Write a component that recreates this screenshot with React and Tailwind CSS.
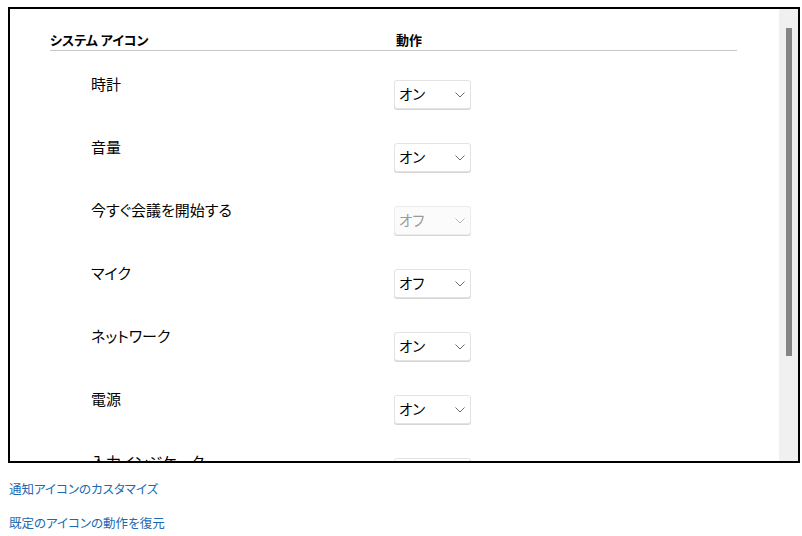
import React from "react";

const rows = [
  { label: "時計", value: "オン" },
  { label: "音量", value: "オン" },
  { label: "今すぐ会議を開始する", value: "オフ", disabled: true },
  { label: "マイク", value: "オフ" },
  { label: "ネットワーク", value: "オン" },
  { label: "電源", value: "オン" },
  { label: "入力インジケーター", value: "オン" },
];

function Chevron({ disabled }) {
  return (
    <svg width="10" height="6" viewBox="0 0 10 6" className="shrink-0">
      <path
        d="M0.5 0.5 L5 5 L9.5 0.5"
        fill="none"
        stroke={disabled ? "#b8b8b8" : "#6a6a6a"}
        strokeWidth="1"
      />
    </svg>
  );
}

function Select({ value, disabled }) {
  return (
    <div
      className={
        "mt-[6px] flex h-[29px] w-[77px] items-center justify-between rounded-[3px] border pl-[4px] pr-[5px] shadow-[0_1px_0_#d6d6d6] " +
        (disabled
          ? "border-[#ececec] bg-[#fbfbfb] text-[#9a9a9a]"
          : "border-[#e3e3e3] bg-white text-black")
      }
    >
      <span className="text-[14.5px] leading-none">{value}</span>
      <Chevron disabled={disabled} />
    </div>
  );
}

export default function App() {
  return (
    <div
      className="h-[536px] w-[802px] bg-white pl-[8px] pt-[7px] text-black [font-feature-settings:'palt']"
      style={{ fontFamily: "'Noto Sans CJK JP', 'Noto Sans', sans-serif" }}
    >
      <div className="flex h-[456px] w-[792px] overflow-hidden border-2 border-black bg-white">
        <div className="flex-1 overflow-hidden pl-[40px] pt-[22px]">
          <div className="flex h-[20px] w-[687px] items-center border-b border-[#c8c8c8] pb-[2px] text-[13px] font-bold leading-none">
            <span className="w-[346px]">システム アイコン</span>
            <span>動作</span>
          </div>
          {rows.map((r) => (
            <div key={r.label} className="flex h-[63px] items-start pt-[23px]">
              <span className="ml-[41px] w-[303px] text-[15px] leading-[20px]">
                {r.label}
              </span>
              <Select value={r.value} disabled={r.disabled} />
            </div>
          ))}
        </div>
        <div className="relative w-[19px] shrink-0 bg-[#f0f0f0]">
          <div className="ml-[7px] mt-[19px] h-[328px] w-[6px] bg-[#858585]" />
        </div>
      </div>
      <div className="flex flex-col gap-[14px] pl-[1px] pt-[16px] text-[12.5px] leading-[20px] text-[#1a6ab3]">
        <span>通知アイコンのカスタマイズ</span>
        <span>既定のアイコンの動作を復元</span>
      </div>
    </div>
  );
}
